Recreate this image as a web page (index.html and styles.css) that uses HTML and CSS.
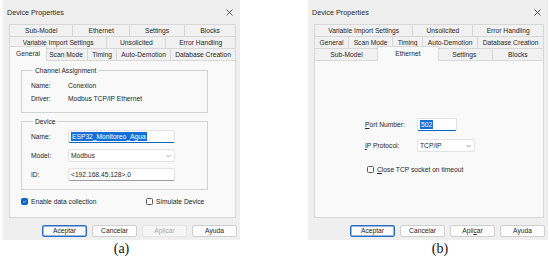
FILE: index.html
```html
<!DOCTYPE html>
<html lang="es">
<head>
    <meta charset="UTF-8">
    <meta name="viewport" content="width=device-width, initial-scale=1.0">
    <title>Device Properties</title>
    <link rel="stylesheet" href="styles.css">
</head>
<body>
    <div class="figure">
        <!-- (a) General tab -->
        <div class="fig-item">
            <div class="dialog dialog-a">
                <div class="titlebar">
                    <span class="title">Device Properties</span>
                    <svg class="close" viewBox="0 0 8 8"><path d="M0.6 0.6L7.4 7.4M7.4 0.6L0.6 7.4"/></svg>
                </div>
                <div class="body">
                    <div class="tabs">
                        <div class="tab-row">
                            <div class="tab">Sub-Model</div>
                            <div class="tab">Ethernet</div>
                            <div class="tab">Settings</div>
                            <div class="tab">Blocks</div>
                        </div>
                        <div class="tab-row">
                            <div class="tab">Variable Import Settings</div>
                            <div class="tab">Unsolicited</div>
                            <div class="tab">Error Handling</div>
                        </div>
                        <div class="tab-row">
                            <div class="tab active">General</div>
                            <div class="tab">Scan Mode</div>
                            <div class="tab">Timing</div>
                            <div class="tab">Auto-Demotion</div>
                            <div class="tab">Database Creation</div>
                        </div>
                    </div>
                    <div class="panel panel-general">
                        <fieldset class="group">
                            <legend>Channel Assignment</legend>
                            <div class="info-row"><span class="label">Name:</span><span>Conexion</span></div>
                            <div class="info-row"><span class="label">Driver:</span><span>Modbus TCP/IP Ethernet</span></div>
                        </fieldset>
                        <fieldset class="group group-device">
                            <legend>Device</legend>
                            <div class="field-row">
                                <span class="label">Name:</span>
                                <div class="input focused"><span class="selected">ESP32_Monitoreo_Agua</span></div>
                            </div>
                            <div class="field-row">
                                <span class="label">Model:</span>
                                <div class="input select">
                                    <span>Modbus</span>
                                    <svg class="chevron" viewBox="0 0 6 4"><path d="M0.5 0.7L3 3.2L5.5 0.7"/></svg>
                                </div>
                            </div>
                            <div class="field-row">
                                <span class="label">ID:</span>
                                <div class="input"><span>&lt;192.168.45.128&gt;.0</span></div>
                            </div>
                        </fieldset>
                        <div class="check-row">
                            <div class="check check-wide">
                                <span class="box checked"><svg viewBox="0 0 7 7"><path d="M1.4 3.6L2.9 5L5.6 2"/></svg></span>
                                Enable data collection
                            </div>
                            <div class="check">
                                <span class="box"></span>
                                Simulate Device
                            </div>
                        </div>
                    </div>
                </div>
                <div class="buttons">
                    <div class="btn default">Aceptar</div>
                    <div class="btn">Cancelar</div>
                    <div class="btn disabled">Aplicar</div>
                    <div class="btn">Ayuda</div>
                </div>
            </div>
            <div class="caption">(a)</div>
        </div>

        <!-- (b) Ethernet tab -->
        <div class="fig-item">
            <div class="dialog dialog-b">
                <div class="titlebar">
                    <span class="title">Device Properties</span>
                    <svg class="close" viewBox="0 0 8 8"><path d="M0.6 0.6L7.4 7.4M7.4 0.6L0.6 7.4"/></svg>
                </div>
                <div class="body">
                    <div class="tabs">
                        <div class="tab-row">
                            <div class="tab">Variable Import Settings</div>
                            <div class="tab">Unsolicited</div>
                            <div class="tab">Error Handling</div>
                        </div>
                        <div class="tab-row">
                            <div class="tab">General</div>
                            <div class="tab">Scan Mode</div>
                            <div class="tab">Timing</div>
                            <div class="tab">Auto-Demotion</div>
                            <div class="tab">Database Creation</div>
                        </div>
                        <div class="tab-row">
                            <div class="tab">Sub-Model</div>
                            <div class="tab active">Ethernet</div>
                            <div class="tab">Settings</div>
                            <div class="tab">Blocks</div>
                        </div>
                    </div>
                    <div class="panel panel-ethernet">
                        <div class="field-row">
                            <span class="label label-wide"><u>P</u>ort Number:</span>
                            <div class="input focused input-port"><span class="selected">502</span></div>
                        </div>
                        <div class="field-row">
                            <span class="label label-wide"><u>I</u>P Protocol:</span>
                            <div class="input select input-proto">
                                <span>TCP/IP</span>
                                <svg class="chevron" viewBox="0 0 6 4"><path d="M0.5 0.7L3 3.2L5.5 0.7"/></svg>
                            </div>
                        </div>
                        <div class="check check-close">
                            <span class="box"></span>
                            <span><u>C</u>lose TCP socket on timeout</span>
                        </div>
                    </div>
                </div>
                <div class="buttons">
                    <div class="btn default">Aceptar</div>
                    <div class="btn">Cancelar</div>
                    <div class="btn">Apli<u>c</u>ar</div>
                    <div class="btn">Ayuda</div>
                </div>
            </div>
            <div class="caption caption-b">(b)</div>
        </div>
    </div>
</body>
</html>
```

FILE: styles.css
```css
:root {
    --dialog-bg: #efefef;
    --panel-bg: #f9f9f9;
    --line: #d8d8d8;
    --text: #262626;
    --blue: #0a64c2;
}
* { box-sizing: border-box; margin: 0; padding: 0; }
body {
    background: #fff;
    font-family: "Liberation Sans", Arial, sans-serif;
    font-size: 6.7px;
    color: var(--text);
}
.figure {
    display: flex;
    gap: 68px;
    padding-left: 3px;
}
.fig-item {
    display: flex;
    flex-direction: column;
    align-items: center;
}
.dialog {
    width: 237px;
    height: 240px;
    background: var(--dialog-bg);
    display: flex;
    flex-direction: column;
}
.dialog-b { width: 240px; }

/* title bar */
.titlebar {
    height: 24px;
    display: flex;
    align-items: center;
    justify-content: space-between;
    padding: 0 7px 0 4px;
    font-size: 7.2px;
}
.close {
    width: 7px;
    height: 7px;
    fill: none;
    stroke: #303030;
    stroke-width: 0.9;
}

/* tabs + page */
.body {
    padding: 0 4px 0 6px;
}
.tabs {
    display: flex;
    flex-direction: column;
}
.tab-row {
    display: flex;
    height: 12px;
}
.tab {
    flex: 1 1 auto;
    text-align: center;
    line-height: 11px;
    white-space: nowrap;
    background: #f1f1f1;
    border: 1px solid var(--line);
    border-bottom: none;
    margin-left: -1px;
}
.tab:first-child { margin-left: 0; }
.tab.active {
    position: relative;
    z-index: 1;
    background: var(--panel-bg);
    margin: -2px -2px -1px -2px;
    line-height: 13px;
    padding: 0 2px;
}
.tab.active:first-child { margin-left: 0; }

.panel {
    height: 158px;
    background: var(--panel-bg);
    border: 1px solid var(--line);
    display: flex;
    flex-direction: column;
}
.panel-general {
    padding: 5px 27px 0 11px;
}
.panel-ethernet {
    padding: 57px 0 0 50px;
    gap: 8px;
}

/* group boxes */
.group {
    border: 1px solid #d3d3d3;
    padding: 4px 0 7px 9px;
}
.group legend {
    margin-left: 2px;
    padding: 0 2px;
    line-height: 9px;
}
.group-device {
    margin-top: 4px;
    padding-bottom: 8px;
    display: flex;
    flex-direction: column;
    gap: 6px;
}
.info-row {
    display: flex;
    align-items: center;
    height: 13px;
}
.label {
    width: 37px;
    flex: none;
}
.label-wide { width: 52px; }

.field-row {
    display: flex;
    align-items: center;
    height: 13px;
}
.input {
    width: 107px;
    height: 13px;
    background: #fff;
    border: 1px solid #e3e3e3;
    border-bottom-color: #9c9c9c;
    border-radius: 2px;
    display: flex;
    align-items: center;
    justify-content: space-between;
    padding: 0 3px 0 2px;
}
.input.focused {
    border-bottom: 1.5px solid var(--blue);
}
.input.select {
    border-bottom-color: #e3e3e3;
}
.input-port { width: 40px; }
.input-proto { width: 58px; }
.selected {
    background: #1570d6;
    color: #fff;
    padding: 0 1px;
    line-height: 9px;
}
.chevron {
    width: 5px;
    height: 4px;
    fill: none;
    stroke: #8a8a8a;
    stroke-width: 0.8;
}

/* checkboxes */
.check-row {
    display: flex;
    align-items: center;
    height: 10px;
    margin-top: 6px;
}
.check {
    display: flex;
    align-items: center;
    gap: 3px;
}
.check-wide { width: 125px; }
.check-close {
    margin: 3px 0 0 2px;
    height: 12px;
}
.box {
    width: 7px;
    height: 7px;
    border: 0.8px solid #555;
    border-radius: 1.5px;
    background: #fff;
    display: flex;
}
.box.checked {
    background: var(--blue);
    border-color: var(--blue);
}
.box svg {
    width: 100%;
    height: 100%;
    fill: none;
    stroke: #fff;
    stroke-width: 0.9;
}

/* dialog buttons */
.buttons {
    flex: 1;
    display: flex;
    justify-content: flex-end;
    align-items: flex-start;
    gap: 5px;
    padding: 7px 3px 0 0;
}
.btn {
    width: 45px;
    height: 12px;
    line-height: 10px;
    text-align: center;
    background: #fdfdfd;
    border: 1px solid #cfcfcf;
    border-radius: 2px;
}
.btn.default {
    border-color: #2c6fc0;
    box-shadow: inset 0 0 0 0.5px #2c6fc0;
}
.btn.disabled {
    color: #a8a8a8;
    background: #f6f6f6;
    border-color: #e4e4e4;
}

.caption {
    font-family: "Liberation Serif", "Times New Roman", serif;
    font-size: 14px;
    line-height: 16px;
    margin-top: 1px;
    color: #111;
}
.caption-b { margin-left: 24px; }
```
